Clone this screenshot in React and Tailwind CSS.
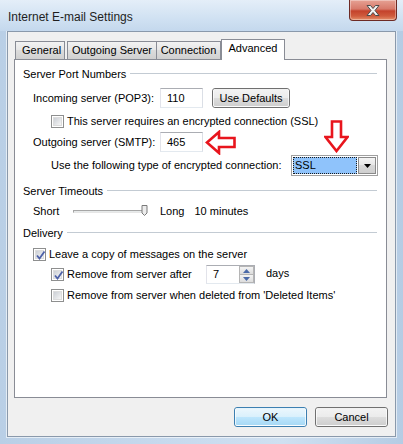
import React from "react";

const font = { fontFamily: '"Liberation Sans", Arial, sans-serif' };

function Checkbox({ checked }) {
  return (
    <div className="w-[13px] h-[13px] border border-[#8e8f8f] bg-white p-px shrink-0">
      <div className="w-full h-full border border-[#dcdcdc] bg-gradient-to-br from-[#cbcfd5] to-[#f6f6f6] relative">
        {checked && (
          <svg width="11" height="11" viewBox="0 0 11 11" className="absolute -left-px -top-px">
            <path d="M2 5.5 L4.5 8.5 L9.5 1.5" fill="none" stroke="#4d61a8" strokeWidth="1.8" />
          </svg>
        )}
      </div>
    </div>
  );
}

function GroupHeader({ children }) {
  return (
    <div className="flex items-center h-[14px] pl-[8px] pr-[9px]">
      <span className="whitespace-nowrap">{children}</span>
      <div className="flex-1 ml-[4px] h-[2px] border-t border-[#c3cbd3] border-b border-b-white" />
    </div>
  );
}

function TextBox({ value, w }) {
  return (
    <div
      className={`h-[20px] ${w} bg-white border border-[#abadb3] border-l-[#e2e3ea] border-r-[#dbdfe6] border-b-[#e3e9ef] flex items-center pl-[6px]`}
    >
      {value}
    </div>
  );
}

function Btn({ children, primary, className }) {
  return (
    <div
      className={`h-[20px] rounded-[3px] border flex items-center justify-center relative overflow-hidden ${
        primary ? "border-[#3c7fb1]" : "border-[#707070]"
      } ${className}`}
    >
      <div
        className={`absolute inset-0 ${
          primary
            ? "bg-[linear-gradient(#eaf6fd_0%,#d9f0fc_50%,#bee6fd_50%,#a7d9f5_100%)]"
            : "bg-[linear-gradient(#f2f2f2_0%,#ebebeb_50%,#dddddd_50%,#cfcfcf_100%)]"
        } border border-white/70 rounded-[2px]`}
      />
      <span className="relative">{children}</span>
    </div>
  );
}

function LeftArrow() {
  return (
    <svg width="31" height="25" viewBox="0 0 31 25" className="shrink-0">
      <polygon
        points="2,12.5 14,2 14,8 29.5,8 29.5,17 14,17 14,23"
        fill="white"
        stroke="#e8151d"
        strokeWidth="2.6"
        strokeLinejoin="miter"
      />
    </svg>
  );
}

function DownArrow() {
  return (
    <svg width="25" height="33" viewBox="0 0 25 33">
      <polygon
        points="8,1.5 17,1.5 17,17 23.5,17 12.5,31 1.5,17 8,17"
        fill="white"
        stroke="#e8151d"
        strokeWidth="2.6"
      />
    </svg>
  );
}

const tabBg = "bg-[linear-gradient(#f2f2f2,#e6e6e6_50%,#dcdcdc_50%,#d0d0d0)]";

export default function App() {
  return (
    <div
      className="w-[403px] h-[444px] overflow-hidden text-[11px] text-black bg-[linear-gradient(90deg,#b9cfe6_0%,#c6d9ed_40%,#cfe0f1_70%,#b5cce4_100%)] flex flex-col"
      style={font}
    >
      {/* Title bar */}
      <div className="h-[31px] flex items-start relative bg-[linear-gradient(180deg,#e4eef8_0%,#d0e1f2_60%,#c4d8ed_100%)]">
        <div className="pl-[8px] pt-[8px] text-[12px] text-[#1e1e1e] whitespace-nowrap">
          Internet E-mail Settings
        </div>
        <div className="ml-auto mr-[6px] w-[48px] h-[21px] rounded-b-[4px] border border-t-0 border-[#6d2a24] bg-[linear-gradient(180deg,#e6a294_0%,#d7796a_45%,#c4422b_55%,#cf5b3d_80%,#e48f6a_100%)] flex items-center justify-center shadow-[inset_0_0_0_1px_rgba(255,255,255,0.35)]">
          <svg width="16" height="13" viewBox="0 0 16 13">
            <path
              d="M2 1.5 L5.5 1.5 L8 4.5 L10.5 1.5 L14 1.5 L10 6.5 L14 11.5 L10.5 11.5 L8 8.5 L5.5 11.5 L2 11.5 L6 6.5 Z"
              fill="#f4f4f4"
              stroke="#4b4b4b"
              strokeWidth="1"
              strokeLinejoin="round"
            />
          </svg>
        </div>
      </div>

      {/* Client area */}
      <div className="mx-[7px] h-[406px] border border-[#8a99ab] bg-[#f0f0f0] flex flex-col shadow-[0_0_0_1px_rgba(255,255,255,0.6)]">
        {/* Tabs */}
        <div className="flex items-end h-[20px] mt-[7px] pl-[7px] relative z-10">
          <div className={`h-[18px] px-[6px] flex items-center border border-[#898c95] border-b-0 ${tabBg} w-[50px]`}>
            General
          </div>
          <div className={`h-[18px] ml-[2px] flex items-center justify-center border border-[#898c95] border-b-0 ${tabBg} w-[90px]`}>
            Outgoing Server
          </div>
          <div className={`h-[18px] flex items-center justify-center border border-l-0 border-[#898c95] border-b-0 ${tabBg} w-[64px]`}>
            Connection
          </div>
          <div className="h-[21px] -mb-px flex items-center justify-center border border-[#898c95] border-b-0 bg-white w-[64px] pb-[3px]">
            Advanced
          </div>
        </div>

        {/* Tab panel */}
        <div className="ml-[6px] w-[373px] h-[339px] border border-[#898c95] bg-white flex flex-col relative">
          <div className="mt-[7px]">
            <GroupHeader>Server Port Numbers</GroupHeader>
          </div>

          <div className="mt-[7px] h-[20px] flex items-center pl-[18px]">
            <span className="w-[127px] whitespace-nowrap">Incoming server (POP3):</span>
            <TextBox value="110" w="w-[43px]" />
            <Btn className="ml-[9px] w-[78px]">Use Defaults</Btn>
          </div>

          <div className="mt-[6px] h-[14px] flex items-center pl-[36px] gap-[3px]">
            <Checkbox />
            <span className="whitespace-nowrap">This server requires an encrypted connection (SSL)</span>
          </div>

          <div className="mt-[4px] h-[20px] flex items-center pl-[18px]">
            <span className="w-[127px] whitespace-nowrap">Outgoing server (SMTP):</span>
            <TextBox value="465" w="w-[43px]" />
            <div className="ml-[2px]">
              <LeftArrow />
            </div>
          </div>

          <div className="mt-[3px] h-[21px] flex items-center pl-[36px]">
            <span className="w-[240px] whitespace-nowrap">Use the following type of encrypted connection:</span>
            <div className="relative w-[87px] h-[21px] border border-[#a0a0a0] bg-white flex items-center p-[1px]">
              <div className="absolute left-[32px] bottom-[22px]">
                <DownArrow />
              </div>
              <div className="flex-1 h-full bg-[#8fc3fb] border border-dotted border-[#1a1a1a] flex items-center pl-[1px]">
                SSL
              </div>
              <div className="w-[18px] h-full ml-[1px] border border-[#8a8a8a] bg-[linear-gradient(#f4f4f4,#e6e6e6_50%,#d8d8d8_50%,#cfcfcf)] flex items-center justify-center">
                <svg width="7" height="4" viewBox="0 0 7 4">
                  <path d="M0 0 L7 0 L3.5 4 Z" fill="#000" />
                </svg>
              </div>
            </div>
          </div>

          <div className="mt-[8px]">
            <GroupHeader>Server Timeouts</GroupHeader>
          </div>

          <div className="mt-[6px] h-[14px] flex items-center pl-[18px]">
            <span className="w-[40px]">Short</span>
            <div className="relative w-[74px] h-[14px] flex items-center">
              <div className="w-[72px] h-[3px] border border-[#a6a6a6] border-b-[#e6e6e6] bg-[#e7eaea]" />
              <svg width="7" height="11" viewBox="0 0 7 11" className="absolute left-[68px] top-[1px]">
                <path d="M1 0.5 L6 0.5 L6 8 L3.5 10.5 L1 8 Z" fill="#ececec" stroke="#7a7a7a" strokeWidth="1" />
              </svg>
            </div>
            <span className="ml-[13px]">Long</span>
            <span className="ml-[10px]">10 minutes</span>
          </div>

          <div className="mt-[8px]">
            <GroupHeader>Delivery</GroupHeader>
          </div>

          <div className="mt-[7px] h-[14px] flex items-center pl-[18px] gap-[3px]">
            <Checkbox checked />
            <span className="whitespace-nowrap">Leave a copy of messages on the server</span>
          </div>

          <div className="mt-[4px] h-[19px] flex items-center pl-[36px]">
            <Checkbox checked />
            <span className="ml-[3px] w-[139px] whitespace-nowrap">Remove from server after</span>
            <div className="w-[49px] h-[19px] border border-[#abadb3] border-l-[#e2e3ea] border-b-[#e3e9ef] bg-white flex">
              <div className="flex-1 flex items-center pl-[6px]">7</div>
              <div className="w-[15px] flex flex-col">
                <div className="flex-1 border border-[#b5b5b5] bg-[linear-gradient(#f4f4f4,#dcdcdc)] flex items-center justify-center">
                  <svg width="7" height="4" viewBox="0 0 7 4"><path d="M0 4 L7 4 L3.5 0 Z" fill="#4b6aa8" /></svg>
                </div>
                <div className="flex-1 border border-t-0 border-[#b5b5b5] bg-[linear-gradient(#f4f4f4,#dcdcdc)] flex items-center justify-center">
                  <svg width="7" height="4" viewBox="0 0 7 4"><path d="M0 0 L7 0 L3.5 4 Z" fill="#4b6aa8" /></svg>
                </div>
              </div>
            </div>
            <span className="ml-[11px] -mt-[2px]">days</span>
          </div>

          <div className="mt-[4px] h-[14px] flex items-center pl-[36px] gap-[3px]">
            <Checkbox />
            <span className="whitespace-nowrap">Remove from server when deleted from 'Deleted Items'</span>
          </div>
        </div>

        {/* Buttons */}
        <div className="mt-[9px] flex justify-end gap-[8px] pr-[7px]">
          <Btn primary className="w-[73px]">OK</Btn>
          <Btn className="w-[73px]">Cancel</Btn>
        </div>
      </div>
    </div>
  );
}
